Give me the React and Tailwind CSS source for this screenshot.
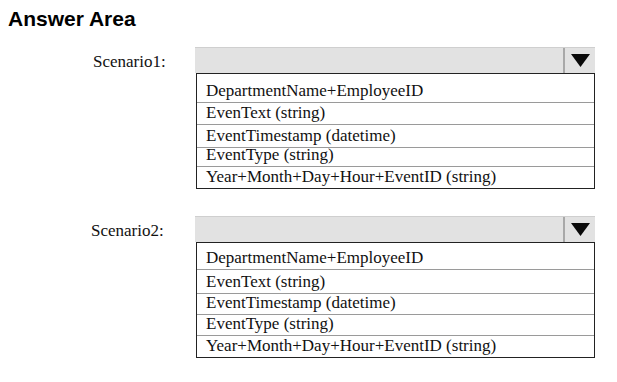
import React from 'react';

const options = [
  'DepartmentName+EmployeeID',
  'EvenText (string)',
  'EventTimestamp (datetime)',
  'EventType (string)',
  'Year+Month+Day+Hour+EventID (string)',
];

const scenarios = [
  { label: 'Scenario1:', pad: 'pl-[85px]', rows: ['h-[28px]', 'h-[22px]', 'h-[23px]', 'h-[19px]', 'h-[22px]'] },
  { label: 'Scenario2:', pad: 'pl-[83px]', rows: ['h-[26px]', 'h-[24px]', 'h-[21px]', 'h-[21px]', 'h-[22px]'] },
];

export default function App() {
  return (
    <div className="w-[617px] h-[382px] bg-white pl-[8px] pt-[7px] overflow-hidden">
      <h1 className="font-['Liberation_Sans',Arial,sans-serif] font-bold text-[21px] leading-[24px] text-black">Answer Area</h1>
      <div className="mt-[16px] flex flex-col gap-[27px]">
        {scenarios.map(s => (
          <Scenario key={s.label} {...s} />
        ))}
      </div>
    </div>
  );
}

function Scenario({ label, pad, rows }) {
  return (
    <div className="flex">
      <div className={`w-[187px] ${pad} h-[26px] flex items-end pb-[1px] font-['Liberation_Serif','Times_New_Roman',serif] text-[17px] leading-[20px] text-[#111]`}>
        {label}
      </div>
      <div className="w-[400px]">
        <div className="h-[26px] flex bg-[#e2e2e2] border-t border-[#cfcfcf]">
          <div className="flex-1" />
          <div className="w-[32px] border-l-2 border-[#a8a8a8] flex items-center justify-center">
            <svg width="19" height="13" viewBox="0 0 19 13"><polygon points="0,0 19,0 9.5,13" fill="#0a0a0a" /></svg>
          </div>
        </div>
        <div className="ml-[1px] border border-[#222] font-['Liberation_Serif','Times_New_Roman',serif] text-[17px] leading-[20px] text-[#111]">
          {options.map((o, i) => (
            <div key={o} className={`${rows[i]} flex items-end pb-[1px] pl-[9px] ${i > 0 ? 'border-t border-[#9a9a9a]' : ''}`}>
              {o}
            </div>
          ))}
        </div>
      </div>
    </div>
  );
}
